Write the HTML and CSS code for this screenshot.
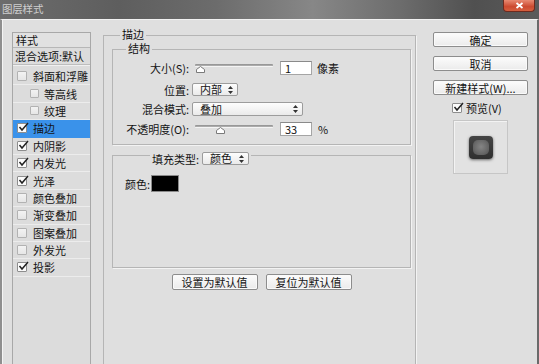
FILE: index.html
```html
<!DOCTYPE html>
<html lang="zh-CN">
<head>
<meta charset="utf-8">
<title>图层样式</title>
<link rel="stylesheet" href="styles.css">
</head>
<body>
<div class="window">
  <div class="titlebar">
    <span class="title">图层样式</span>
    <div class="close"><svg width="9" height="7" viewBox="0 0 9 7"><path d="M1.5 1 L7.5 6 M7.5 1 L1.5 6" stroke="#fff" stroke-width="1.8"/></svg></div>
  </div>
  <div class="frame">
    <div class="sidebar">
      <div class="side-head">样式</div>
      <div class="side-blend">混合选项:默认</div>
      <div class="side-list">
        <div class="item"><span class="cb off"></span>斜面和浮雕</div>
        <div class="item indent"><span class="cb off small"></span>等高线</div>
        <div class="item indent"><span class="cb off small"></span>纹理</div>
        <div class="item selected"><span class="cb"><svg width="11" height="10" viewBox="0 0 11 10"><path d="M1.5 5 L4 8 L10 1" fill="none" stroke="#222" stroke-width="1.5"/></svg></span>描边</div>
        <div class="item"><span class="cb"><svg width="11" height="10" viewBox="0 0 11 10"><path d="M1.5 5 L4 8 L10 1" fill="none" stroke="#222" stroke-width="1.5"/></svg></span>内阴影</div>
        <div class="item"><span class="cb"><svg width="11" height="10" viewBox="0 0 11 10"><path d="M1.5 5 L4 8 L10 1" fill="none" stroke="#222" stroke-width="1.5"/></svg></span>内发光</div>
        <div class="item"><span class="cb"><svg width="11" height="10" viewBox="0 0 11 10"><path d="M1.5 5 L4 8 L10 1" fill="none" stroke="#222" stroke-width="1.5"/></svg></span>光泽</div>
        <div class="item"><span class="cb off"></span>颜色叠加</div>
        <div class="item"><span class="cb off"></span>渐变叠加</div>
        <div class="item"><span class="cb off"></span>图案叠加</div>
        <div class="item"><span class="cb off"></span>外发光</div>
        <div class="item"><span class="cb"><svg width="11" height="10" viewBox="0 0 11 10"><path d="M1.5 5 L4 8 L10 1" fill="none" stroke="#222" stroke-width="1.5"/></svg></span>投影</div>
      </div>
    </div>

    <div class="main">
      <div class="box outer">
        <div class="box-title outer-title">描边</div>
        <div class="box struct">
          <div class="box-title struct-title">结构</div>
          <div class="row row-size">
            <span class="label">大小(S):</span>
            <div class="slider"><div class="track"></div><svg class="thumb thumb-size" width="9" height="7" viewBox="0 0 9 7"><path d="M0.5 6.5 V3.5 L4.5 0.5 L8.5 3.5 V6.5 Z" fill="#fff" stroke="#7a7a7a"/></svg></div>
            <div class="input">1</div>
            <span class="unit">像素</span>
          </div>
          <div class="row row-pos">
            <span class="label">位置:</span>
            <div class="select sel-pos"><span>内部</span><svg width="5" height="8" viewBox="0 0 5 8"><path d="M2.5 0 L5 3 H0 Z M2.5 8 L5 5 H0 Z" fill="#333"/></svg></div>
          </div>
          <div class="row row-mode">
            <span class="label">混合模式:</span>
            <div class="select sel-mode"><span>叠加</span><svg width="5" height="8" viewBox="0 0 5 8"><path d="M2.5 0 L5 3 H0 Z M2.5 8 L5 5 H0 Z" fill="#333"/></svg></div>
          </div>
          <div class="row row-opacity">
            <span class="label">不透明度(O):</span>
            <div class="slider"><div class="track"></div><svg class="thumb thumb-op" width="9" height="7" viewBox="0 0 9 7"><path d="M0.5 6.5 V3.5 L4.5 0.5 L8.5 3.5 V6.5 Z" fill="#fff" stroke="#7a7a7a"/></svg></div>
            <div class="input">33</div>
            <span class="unit pct">%</span>
          </div>
        </div>

        <div class="box fill">
          <div class="box-title fill-title">
            <span>填充类型:</span>
            <div class="select sel-fill"><span>颜色</span><svg width="5" height="8" viewBox="0 0 5 8"><path d="M2.5 0 L5 3 H0 Z M2.5 8 L5 5 H0 Z" fill="#333"/></svg></div>
          </div>
          <div class="color-row">
            <span class="color-label">颜色:</span>
            <div class="swatch"></div>
          </div>
        </div>

        <div class="defaults">
          <div class="btn btn-def">设置为默认值</div>
          <div class="btn btn-def">复位为默认值</div>
        </div>
      </div>
    </div>

    <div class="actions">
      <div class="btn btn-act">确定</div>
      <div class="btn btn-act">取消</div>
      <div class="btn btn-act">新建样式(W)...</div>
      <div class="preview-check"><span class="cb"><svg width="11" height="10" viewBox="0 0 11 10"><path d="M1.5 5 L4 8 L10 1" fill="none" stroke="#222" stroke-width="1.5"/></svg></span>预览(V)</div>
      <div class="preview-box"><div class="preview-icon"><div class="preview-core"></div></div></div>
    </div>
  </div>
</div>
</body>
</html>
```

FILE: styles.css
```css
* { box-sizing: border-box; margin: 0; padding: 0; }
html, body { width: 539px; height: 364px; overflow: hidden; }
body {
  font-family: "Noto Sans CJK SC", "Noto Sans", sans-serif;
  font-size: 11px;
  line-height: 14px;
  color: #141414;
  background: #dfdfdf;
}
.window { width: 539px; height: 364px; display: flex; flex-direction: column; overflow: hidden; }

.titlebar {
  height: 19px; flex: none; display: flex; align-items: flex-start;
  background: linear-gradient(90deg, #6c6c6c 0%, #5e5e5e 22%, #6c6c6c 40%, #878787 58%, #6d6d6d 74%, #505050 88%, #5a5a5a 100%);
}
.title { color: #cfcfcf; font-size: 10.5px; line-height: 12px; padding: 3px 0 0 2px; letter-spacing: -0.2px; }
.close {
  margin-left: auto; margin-right: 4px; width: 32px; height: 12px;
  border: 1px solid #6e2a1e; border-top: none; border-radius: 0 0 4px 4px;
  background: linear-gradient(#e88a72, #cc4a30 60%, #d6603f);
  display: flex; align-items: center; justify-content: center;
}

.frame {
  flex: 1; display: flex; align-items: flex-start;
  border-top: 1px solid #f1f1f1;
  border-left: 2px solid #8f8f8f;
  border-right: 2px solid #6a6a6a;
  box-shadow: inset 1px 0 0 #f4f4f4;
}

/* sidebar */
.sidebar {
  margin: 12px 0 0 10px; width: 79px; height: 340px; flex: none;
  border: 1px solid #a8a8a8; border-bottom: none; background: #dcdcdc;
}
.side-head { height: 15px; padding-left: 3px; line-height: 14px; border-bottom: 1px solid #b7b7b7; background: #e1e1e1; }
.side-blend { height: 17px; padding-left: 2px; line-height: 16px; border-bottom: 1px solid #bdbdbd; box-shadow: 0 1px 0 #f0f0f0; }
.side-list { margin-top: 3px; }
.item {
  height: 17.4px; display: flex; align-items: center; gap: 6px; padding-left: 4px;
  border-bottom: 1px solid #ececec;
}
.item.indent { padding-left: 17px; gap: 5px; }
.item.selected { background: #3a92ea; border-bottom-color: #3a92ea; }
.cb {
  width: 10px; height: 10px; flex: none; position: relative;
  border: 1px solid #8d8d8d; border-radius: 1px; background: #fbfbfb;
}
.cb svg { position: absolute; left: 0; top: -2px; }
.cb.off { border-color: #b2b2b2; background: linear-gradient(#f3f3f3, #e6e6e6); }
.cb.small { width: 9px; height: 9px; }

/* main */
.main { margin: 15px 0 0 12px; width: 313px; flex: none; }
.box { border: 1px solid #b5b5b5; display: flex; flex-direction: column; box-shadow: 1px 1px 0 #f3f3f3; }
.outer { height: 345px; border-bottom: none; padding: 0 4px 0 8px; }
.box-title { align-self: flex-start; background: #dfdfdf; padding: 0 2px; line-height: 14px; white-space: nowrap; }
.outer-title { margin: -9px 0 0 8px; }
.struct { margin-top: 8px; padding-bottom: 8px; }
.struct-title { margin: -9px 0 0 13px; }

.row { display: flex; align-items: center; }
.label { width: 76px; text-align: right; flex: none; white-space: nowrap; }
.row-size { margin-top: 6px; height: 14px; }
.row-pos { margin-top: 8px; height: 13px; }
.row-mode { margin-top: 6px; height: 14px; }
.row-opacity { margin-top: 6px; height: 14px; }

.slider { position: relative; width: 78px; height: 14px; margin-left: 6px; flex: none; }
.track {
  margin-top: 3px; height: 3px; background: linear-gradient(#8e8e8e, #b4b4b4);
  border-bottom: 1px solid #f4f4f4; border-radius: 1px;
}
.thumb { position: absolute; top: 5px; }
.thumb-size { left: 1px; }
.thumb-op { left: 21px; }

.input {
  width: 32px; height: 14px; margin-left: 7px; flex: none;
  background: #fff; border: 1px solid #a5a5a5; border-top-color: #8a8a8a;
  padding-left: 4px; line-height: 12px;
}
.unit { margin-left: 5px; }
.unit.pct { margin-left: 6px; }

.select {
  display: flex; align-items: center; justify-content: space-between;
  height: 13px; padding: 0 4px 0 7px; margin-left: 3px; flex: none;
  border: 1px solid #9c9c9c; border-radius: 2px;
  background: linear-gradient(#fdfdfd, #eaeaea);
  line-height: 11px;
}
.sel-pos { width: 46px; }
.sel-mode { width: 111px; height: 14px; }
.sel-fill { width: 47px; margin-left: 3px; }

.fill { margin-top: 10px; height: 113px; }
.fill-title { margin: -4px 0 0 37px; display: flex; align-items: center; height: 13px; }
.color-row { display: flex; align-items: center; margin-top: 10px; padding-left: 12px; height: 17px; }
.color-label { white-space: nowrap; margin-right: 1px; }
.swatch { width: 28px; height: 17px; background: #000; border: 1px solid #8a8a8a; }

.defaults { display: flex; justify-content: center; gap: 8px; margin-top: 6px; width: 299px; }
.btn {
  height: 16px; display: flex; align-items: center; justify-content: center;
  border: 1px solid #8d8d8d; border-radius: 2px;
  background: linear-gradient(#fcfcfc, #ebebeb);
  box-shadow: inset 0 0 0 1px #fafafa;
  line-height: 12px; white-space: nowrap;
}
.btn-def { width: 86px; }

/* right actions */
.actions { margin: 12px 0 0 17px; width: 95px; flex: none; display: flex; flex-direction: column; }
.btn-act { height: 15px; margin-bottom: 9px; }
.preview-check { display: flex; align-items: center; gap: 4px; margin: -1px 0 0 19px; height: 10px; }
.preview-box {
  margin: 7px 0 0 20px; width: 55px; height: 54px;
  border: 1px solid #c6c6c6; background: #e2e2e2;
  display: flex; align-items: center; justify-content: center;
  box-shadow: inset 1px 1px 0 #f3f3f3;
}
.preview-icon {
  width: 24px; height: 23px; border-radius: 4px;
  display: flex; align-items: center; justify-content: center;
  background: linear-gradient(#454545, #2f2f2f);
  box-shadow: 0 1px 3px rgba(0,0,0,0.55);
}
.preview-core {
  width: 16px; height: 15px; border-radius: 5px;
  background: radial-gradient(circle at 50% 45%, #858585 0, #6a6a6a 55%, #505050 100%);
}
```
